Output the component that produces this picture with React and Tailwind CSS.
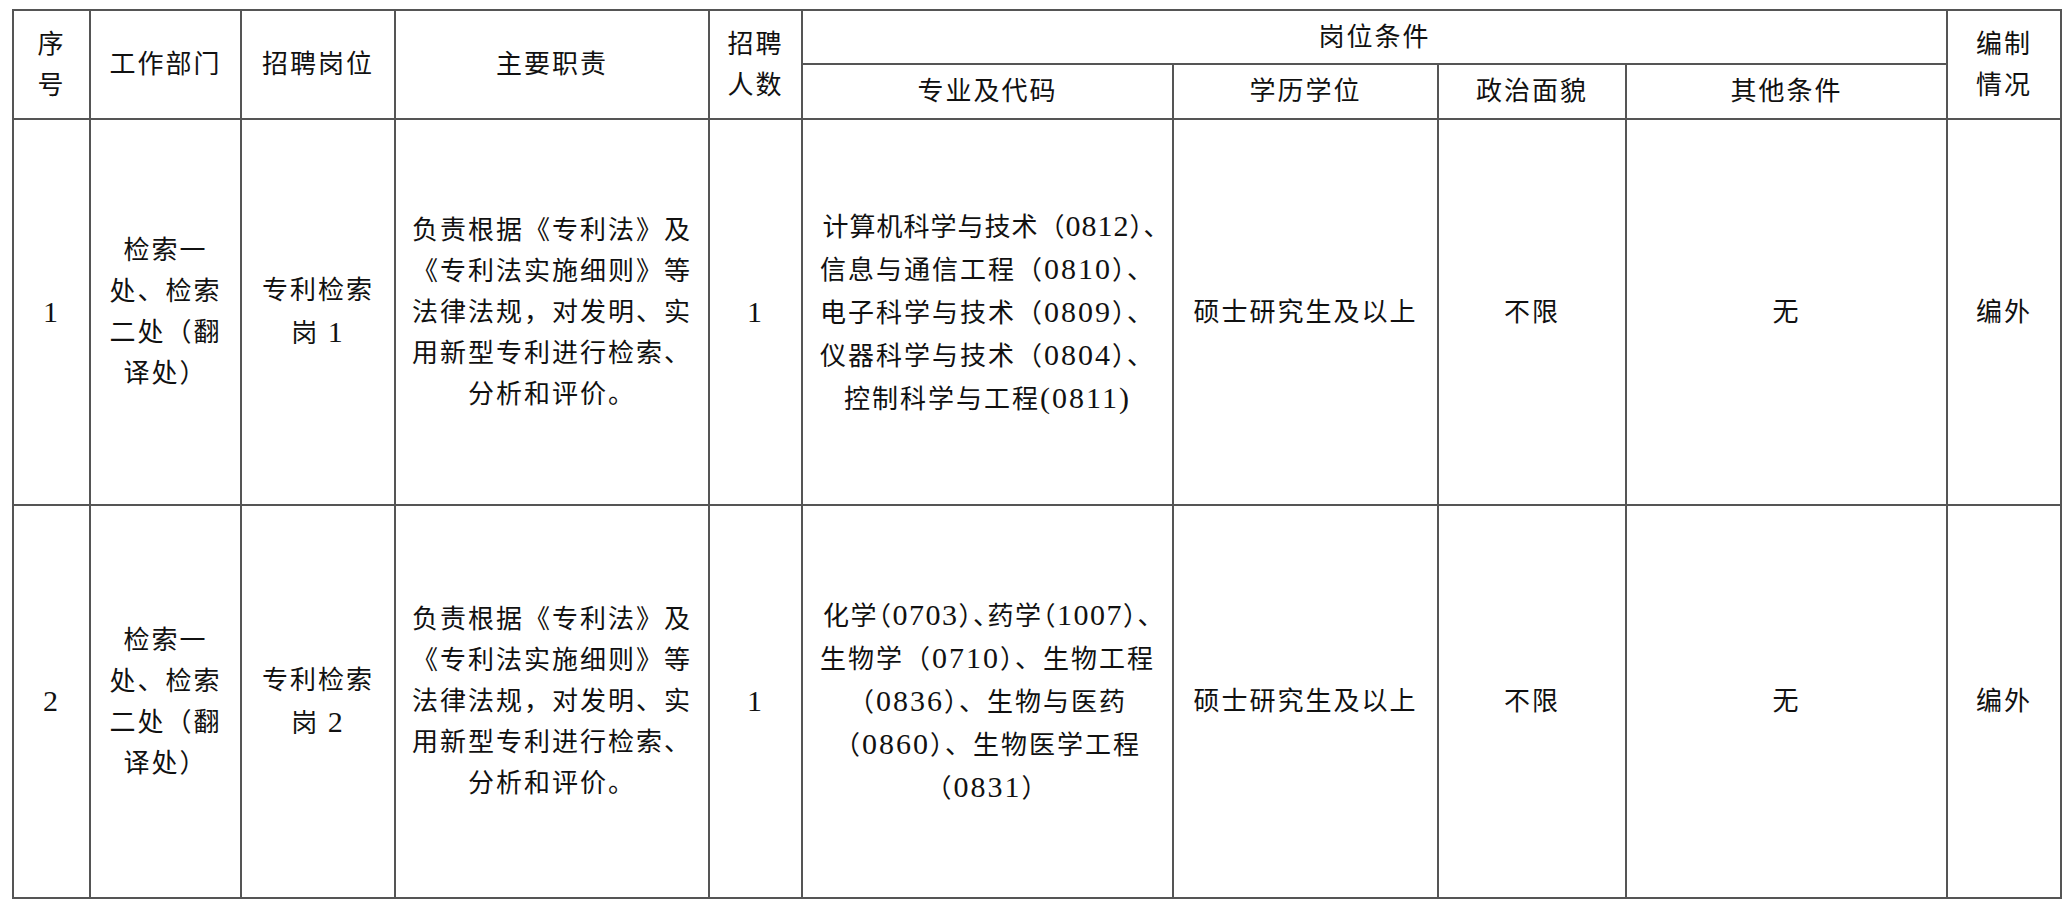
const dept = ['检索一', '处、检索', '二处（翻', '译处）'];

const duty = [
  '负责根据《专利法》及',
  '《专利法实施细则》等',
  '法律法规，对发明、实',
  '用新型专利进行检索、',
  '分析和评价。',
];

const rows = [
  {
    no: '1',
    post: ['专利检索', '岗 1'],
    h: 'h-[386px]',
    majors: [
      { t: '计算机科学与技术（0812）、', cls: 'tracking-[1px] pl-[18px]' },
      { t: '信息与通信工程（0810）、' },
      { t: '电子科学与技术（0809）、' },
      { t: '仪器科学与技术（0804）、' },
      { t: '控制科学与工程(0811)' },
    ],
  },
  {
    no: '2',
    post: ['专利检索', '岗 2'],
    h: 'h-[393px]',
    majors: [
      { t: '化学（0703）、药学（1007）、', cls: "[font-feature-settings:'halt'] tracking-[1.5px]" },
      { t: '生物学（0710）、生物工程' },
      { t: '（0836）、生物与医药' },
      { t: '（0860）、生物医学工程' },
      { t: '（0831）' },
    ],
  },
];

const td = 'border-2 border-[#555] text-center align-middle p-0 font-normal';

// digits and half-width brackets are set in the larger serif face, as in the original doc
function T({ s }) {
  return s.split(/([0-9()]+)/).map((part, i) =>
    /^[0-9()]+$/.test(part) ? (
      <span key={i} className="text-[30px]">
        {part}
      </span>
    ) : (
      part
    )
  );
}

function Lines({ items }) {
  return (
    <div className="flex flex-col items-center">
      {items.map((l, i) => (
        <div key={i} className="whitespace-nowrap">
          <T s={l} />
        </div>
      ))}
    </div>
  );
}

export default function App() {
  return (
    <div className="min-h-screen bg-white pl-[12px] pt-[9px]">
      <table className="table-fixed border-collapse w-[2048px] text-[26px] leading-[41px] tracking-[2px] text-[#111] font-['Liberation_Serif','Noto_Sans_CJK_SC',serif]">
        <colgroup>
          <col className="w-[77px]" />
          <col className="w-[151px]" />
          <col className="w-[154px]" />
          <col className="w-[314px]" />
          <col className="w-[93px]" />
          <col className="w-[371px]" />
          <col className="w-[265px]" />
          <col className="w-[188px]" />
          <col className="w-[321px]" />
          <col className="w-[114px]" />
        </colgroup>
        <thead>
          <tr className="h-[54px]">
            <th rowSpan={2} className={td}>
              <Lines items={['序', '号']} />
            </th>
            <th rowSpan={2} className={td}>工作部门</th>
            <th rowSpan={2} className={td}>招聘岗位</th>
            <th rowSpan={2} className={td}>主要职责</th>
            <th rowSpan={2} className={td}>
              <Lines items={['招聘', '人数']} />
            </th>
            <th colSpan={4} className={td}>岗位条件</th>
            <th rowSpan={2} className={td}>
              <Lines items={['编制', '情况']} />
            </th>
          </tr>
          <tr className="h-[55px]">
            <th className={td}>专业及代码</th>
            <th className={td}>学历学位</th>
            <th className={td}>政治面貌</th>
            <th className={td}>其他条件</th>
          </tr>
        </thead>
        <tbody>
          {rows.map((r) => (
            <tr key={r.no} className={r.h}>
              <td className={td}>
                <T s={r.no} />
              </td>
              <td className={td}>
                <Lines items={dept} />
              </td>
              <td className={td}>
                <Lines items={r.post} />
              </td>
              <td className={td}>
                <Lines items={duty} />
              </td>
              <td className={td}>
                <T s="1" />
              </td>
              <td className={td}>
                <div className="flex flex-col items-center">
                  {r.majors.map((m, i) => (
                    <div key={i} className={'whitespace-nowrap ' + (m.cls || '')}>
                      <T s={m.t} />
                    </div>
                  ))}
                </div>
              </td>
              <td className={td}>硕士研究生及以上</td>
              <td className={td}>不限</td>
              <td className={td}>无</td>
              <td className={td}>编外</td>
            </tr>
          ))}
        </tbody>
      </table>
    </div>
  );
}
